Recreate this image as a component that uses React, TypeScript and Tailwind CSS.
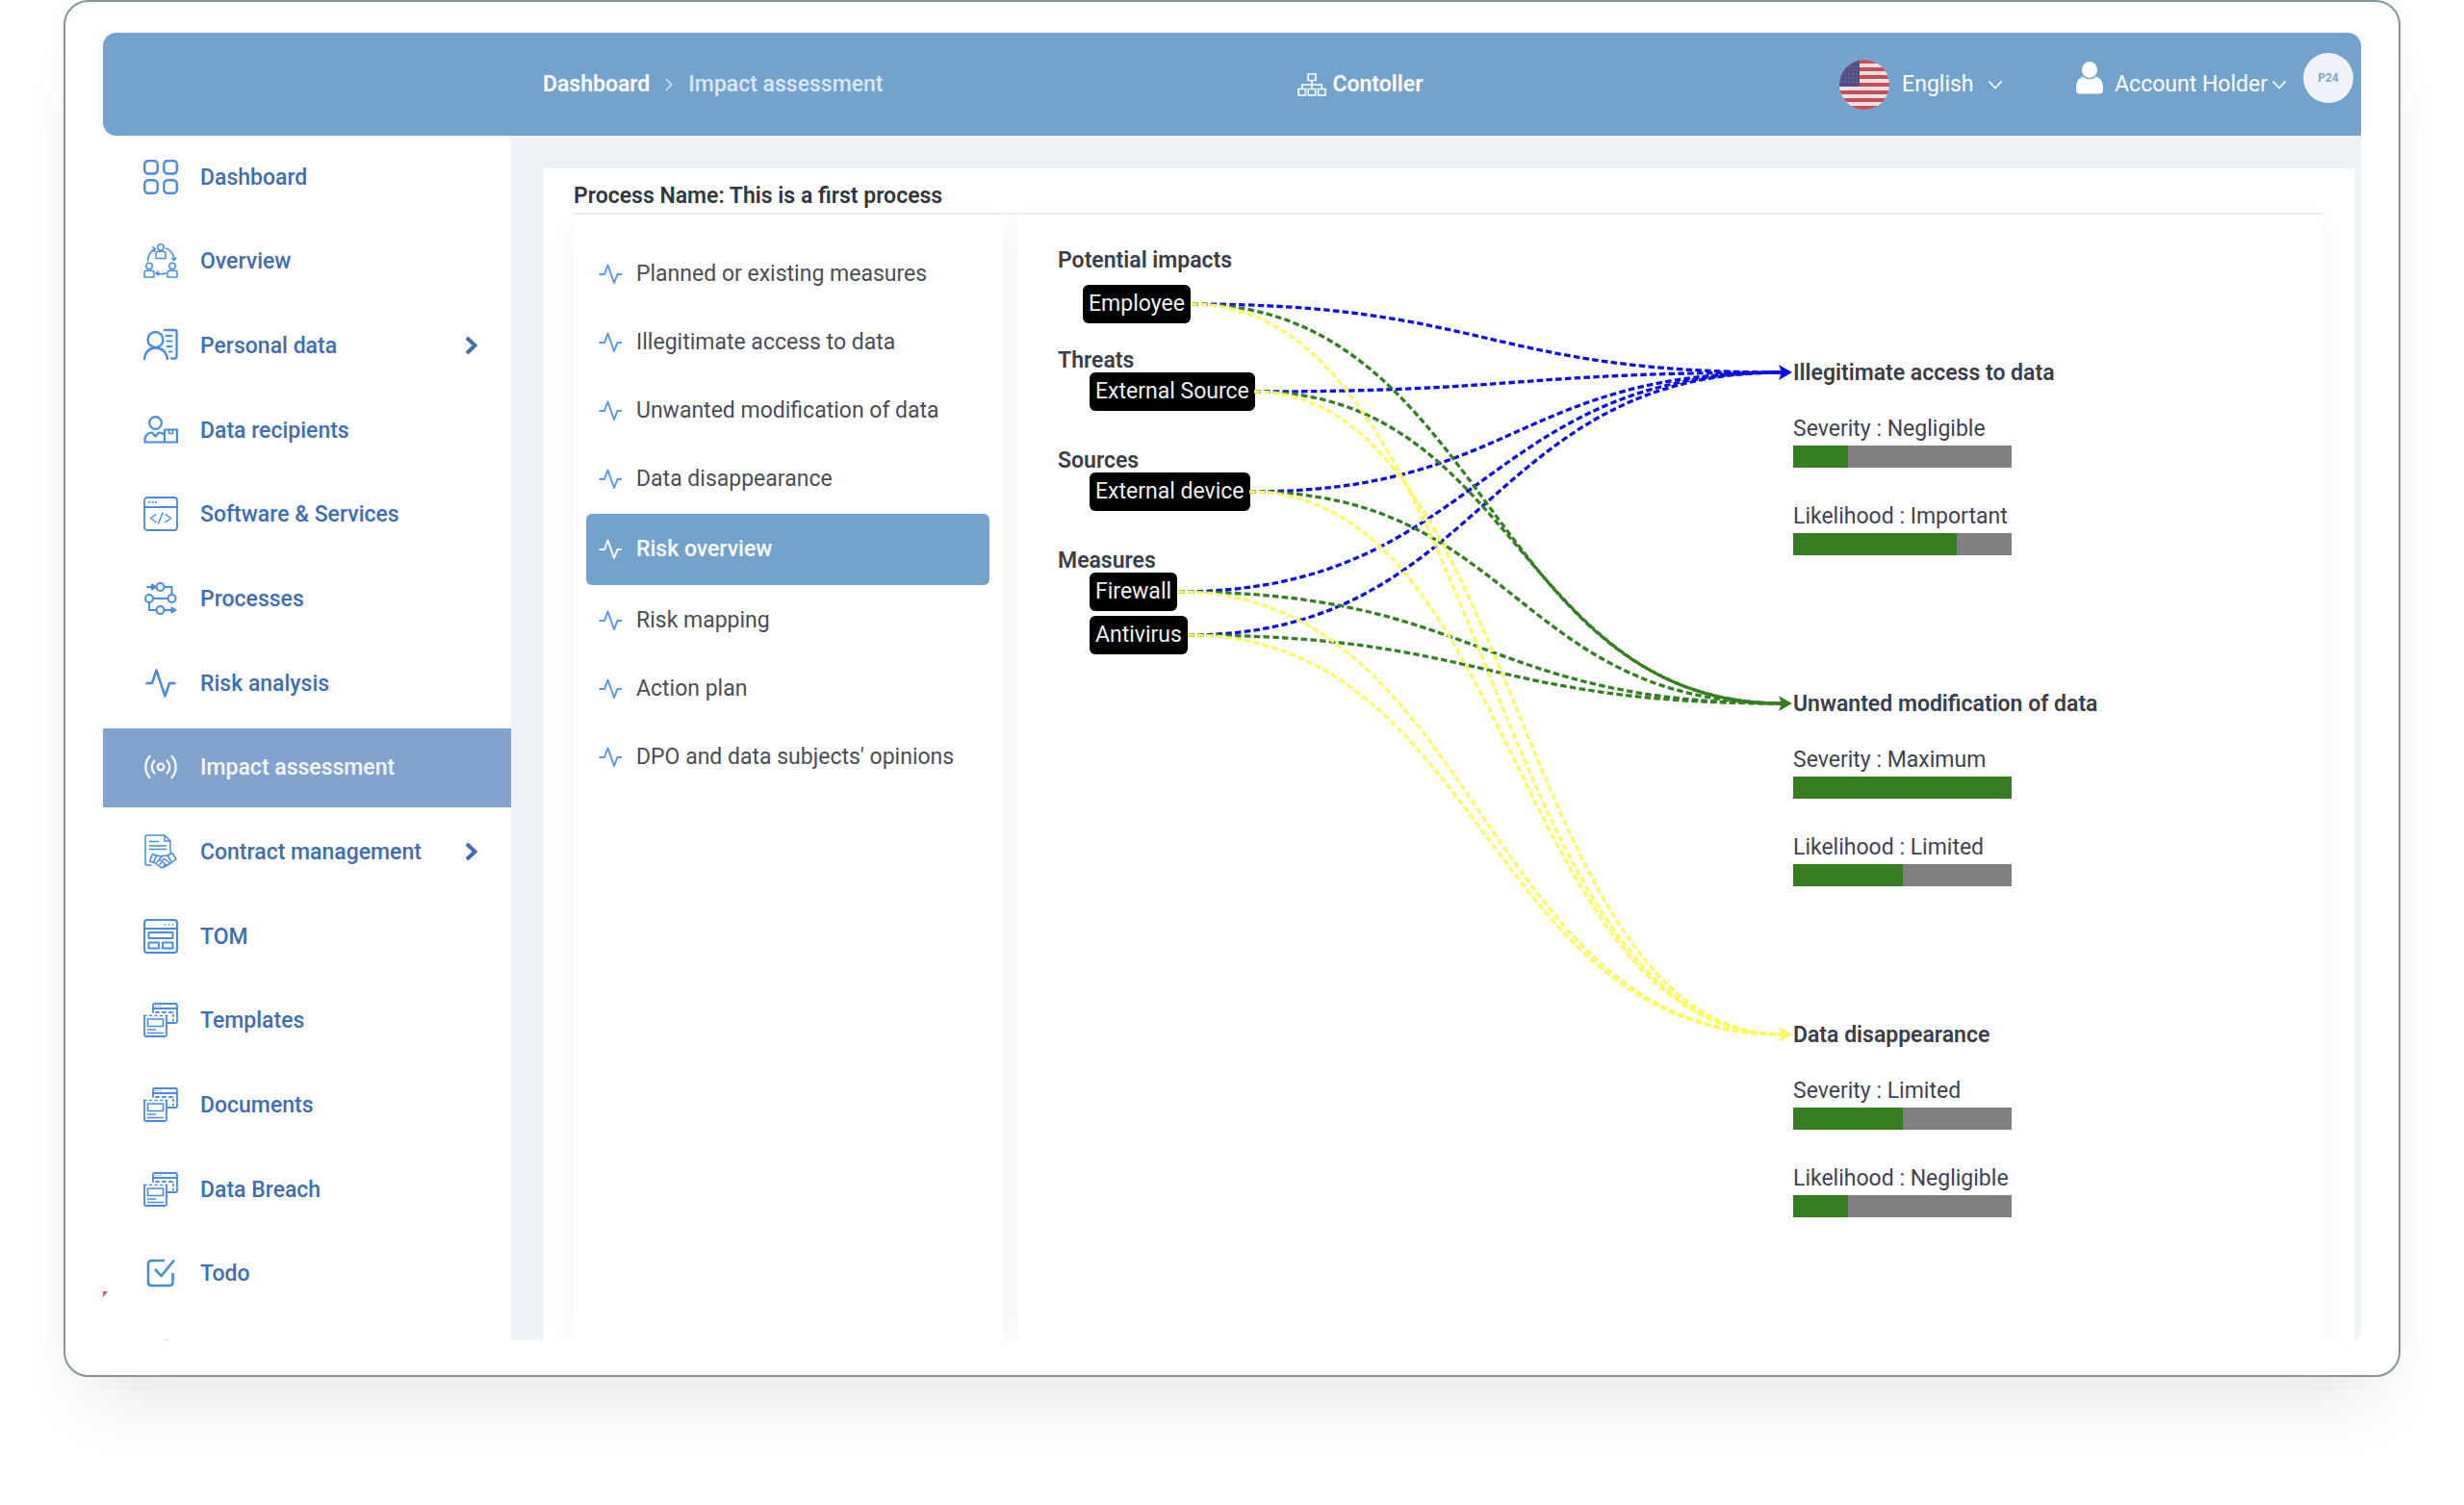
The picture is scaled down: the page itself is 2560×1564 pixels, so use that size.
import type { ReactNode } from "react";

type Tone = "blue" | "green" | "yellow";

const toneColor: Record<Tone, string> = {
  blue: "#0c0ce4",
  green: "#357f22",
  yellow: "#fdfb62",
};

/* ---------- icons ---------- */

function Icon({ children }: { children: ReactNode }) {
  return (
    <svg
      viewBox="0 0 36 36"
      className="size-9 shrink-0"
      fill="none"
      stroke="currentColor"
      strokeWidth="1.8"
      strokeLinecap="round"
      strokeLinejoin="round"
      aria-hidden="true"
    >
      {children}
    </svg>
  );
}

function GridIcon() {
  return (
    <Icon>
      <g strokeWidth="2.4">
        <rect x="1.2" y="1" width="13.5" height="13.5" rx="4" />
        <rect x="21.3" y="1" width="13.5" height="13.5" rx="4" />
        <rect x="1.2" y="21.3" width="13.5" height="13.5" rx="4" />
        <rect x="21.3" y="21.3" width="13.5" height="13.5" rx="4" />
      </g>
    </Icon>
  );
}

function OverviewIcon() {
  return (
    <Icon>
      <g strokeWidth="1.5">
        <circle cx="18" cy="4" r="3.2" />
        <path d="M13 15.5v-5q0-2.3 2.3-2.3h5.4q2.3 0 2.3 2.3v5z" />
        <circle cx="6" cy="23.5" r="3.2" />
        <path d="M1 35v-4.5q0-2.3 2.3-2.3h5.4q2.3 0 2.3 2.3V35z" />
        <circle cx="30" cy="23.5" r="3.2" />
        <path d="M25 35v-4.5q0-2.3 2.3-2.3h5.4q2.3 0 2.3 2.3V35z" />
        <path d="M4.5 18C4.8 12 7.5 8 12 5.5M9.5 3.8l3 1.5-1.5 3M23.5 5C28.5 7 31.5 11 32 17M29.5 15.5l2.5 2.2 1.8-2.8M23.5 31c-3 1-7 1-10 0M15.5 29.5l-2.5 1.3 2 2" />
      </g>
    </Icon>
  );
}

function PersonalDataIcon() {
  return (
    <Icon>
      <g strokeWidth="2.3">
        <circle cx="12.5" cy="12" r="8" />
        <path d="M1 32c1.2-8 5.5-11.5 11.5-11.5S23.5 24 25 32M22 2h10.5q2 0 2 2v25.5q0 2-2 2H29" />
        <path d="M23.5 8h6M24.5 13.5h5M24.5 19h5M27 24.5h2.5" strokeWidth="2" />
      </g>
    </Icon>
  );
}

function RecipientsIcon() {
  return (
    <Icon>
      <g strokeWidth="2.2">
        <circle cx="12.5" cy="10.5" r="6.3" />
        <path d="M22 30.5H1.5V28c0-4.5 3.5-7.5 7.5-7.5l3.5 4 3.5-4c2.5 0 4 .7 5.5 2M22 17.5h13v13H22z" />
        <path d="M26.5 17.5v4h4v-4" strokeWidth="1.6" />
      </g>
    </Icon>
  );
}

function SoftwareIcon() {
  return (
    <Icon>
      <rect x="1" y="1" width="34" height="34" rx="3" />
      <path d="M1 11h34" />
      <path d="M6 6h.1M9.5 6h.1M13 6h.1" strokeWidth="2.2" />
      <path d="M13 18.5l-5.5 4 5.5 4M23 18.5l5.5 4-5.5 4M20 17l-4.5 11" strokeWidth="1.5" />
    </Icon>
  );
}

function ProcessesIcon() {
  return (
    <Icon>
      <g strokeWidth="2">
        <circle cx="17.5" cy="6" r="4" />
        <circle cx="6" cy="18" r="4" />
        <circle cx="29.5" cy="18" r="4" />
        <circle cx="17.5" cy="30" r="4" />
        <path d="M4 6h9.5M9 3.5L12.5 6 9 8.5zM21.5 6h8v8M10 18h15.5M6 22v8h7.5M21.5 30H32M29.5 27.5l4 2.5-4 2.5z" />
      </g>
    </Icon>
  );
}

function PulseIcon() {
  return (
    <Icon>
      <path
        d="M2.5 18h6.5L13.5 4.5l9 27L27 18h6.5"
        strokeWidth="2.5"
        strokeLinecap="butt"
      />
    </Icon>
  );
}

function BroadcastIcon() {
  return (
    <Icon>
      <circle cx="18" cy="18" r="3.3" strokeWidth="2.3" />
      <path
        d="M11.5 11.5c-3.7 3.8-3.7 9.2 0 13M24.5 11.5c3.7 3.8 3.7 9.2 0 13M6.5 7c-5.5 6-5.5 16 0 22M29.5 7c5.5 6 5.5 16 0 22"
        strokeWidth="2.3"
      />
    </Icon>
  );
}

function ContractIcon() {
  return (
    <Icon>
      <g strokeWidth="1.5">
        <path d="M8 32H4q-2 0-2-2V3q0-2 2-2h18l6 6v12M22 1v6h6M6.5 7.5h9M6.5 12h17M6.5 15.5h17" />
        <path d="M9.5 20.5l-3 7.5 4 1.5 3-7.5zM30 19.5l-5 2.5 4.5 7 4.5-3z" />
        <path d="M13 22.5c3-.5 5 .5 6.5 0l5-.5M11 29l6.5 5q2 1.2 4 0l7.5-4.5M19.5 22.5l-3.5 4c1.5 1.5 4 .5 5.5-1l6 4.5M14 29l2-2M17 31.5l2-2.5M21 33.5l1.5-2.5M20 28.5l4.5 4" />
      </g>
    </Icon>
  );
}

function TomIcon() {
  return (
    <Icon>
      <g strokeWidth="2">
        <rect x="1" y="1" width="34" height="34" rx="3" />
        <path d="M1 10h34" />
        <path d="M22.5 5.8h.1M26.5 5.8h.1M30.5 5.8h.1" strokeWidth="1.6" />
        <rect x="5.5" y="14" width="25" height="6" />
        <rect x="5.5" y="24.5" width="10.5" height="6" />
        <rect x="20" y="24.5" width="10.5" height="6" />
      </g>
    </Icon>
  );
}

function TemplatesIcon() {
  return (
    <Icon>
      <path d="M10 10V2.5Q10 1 11.5 1h22Q35 1 35 2.5v17q0 1.500-1.500 1.500H25M10 6h25" />
      <path d="M12.5 3.5h.1M15 3.5h.1M17.5 3.5h.1" strokeWidth="1.2" />
      <path d="M13 10h18" strokeDasharray="3 4" strokeWidth="1.8" />
      <path d="M31 12.5v6" strokeDasharray="1.5 3.5" strokeWidth="1.8" />
      <path d="M1 13.5v20Q1 35 2.5 35h20q1.500 0 1.500-1.500v-20" />
      <path d="M1 13.5h23" strokeDasharray="2 3.5" strokeWidth="1.5" />
      <path d="M4.5 17h16v7.5h-16zM4.5 28h8M4.5 31.5h16" strokeWidth="1.6" />
    </Icon>
  );
}

function TodoIcon() {
  return (
    <Icon>
      <path
        d="M22 5H8.5Q5 5 5 8.5v19Q5 31 8.5 31H27q3.500 0 3.500-3.500V18M12 14l6.500 7L32 4.500"
        strokeWidth="2.6"
        strokeLinecap="butt"
      />
    </Icon>
  );
}

function SmallPulse() {
  return (
    <svg
      viewBox="0 0 26 26"
      className="size-[26px] shrink-0"
      fill="none"
      stroke="currentColor"
      strokeWidth="2"
      strokeLinejoin="round"
      aria-hidden="true"
    >
      <path d="M1.5 13h5.5L10.5 3.5l6.5 18.500L20.5 13H25" />
    </svg>
  );
}

function ChevronDown() {
  return (
    <svg
      viewBox="0 0 16 16"
      className="size-4"
      fill="none"
      stroke="currentColor"
      strokeWidth="1.7"
      aria-hidden="true"
    >
      <path d="M1.5 4.5L8 11.5l6.500-7" />
    </svg>
  );
}

function FlagIcon() {
  const stripes = [0, 2, 4, 6, 8, 10, 12];
  return (
    <svg viewBox="0 0 52 52" className="size-[52px] rounded-full" aria-hidden="true">
      <rect width="52" height="52" fill="#f6dfe2" />
      {stripes.map((n) => (
        <rect key={n} y={n * 4} width="52" height="4" fill="#bf5058" />
      ))}
      <rect width="21" height="28" fill="#524f86" />
      {[3, 7, 11, 15, 19, 23].map((y) => (
        <path
          key={y}
          d={`M1 ${y}h20`}
          stroke="#8583ad"
          strokeWidth="1.2"
          strokeDasharray="1.2 3"
        />
      ))}
    </svg>
  );
}

/* ---------- header ---------- */

function Header() {
  return (
    <header className="flex h-[107px] items-center rounded-l-[14px] rounded-tr-[14px] bg-[#73a3cd] pr-2 text-white">
      <nav aria-label="Breadcrumb" className="ml-[457px] flex items-center font-semibold">
        <a href="#dashboard">Dashboard</a>
        <svg
          viewBox="0 0 8 14"
          className="mx-4 h-3.5 w-2"
          fill="none"
          stroke="#d3e3f2"
          strokeWidth="1.6"
          aria-hidden="true"
        >
          <path d="M1 1l5.500 6L1 13" />
        </svg>
        <span className="font-medium text-[#dbe7f4]">Impact assessment</span>
      </nav>

      <div className="ml-[431px] flex items-center gap-1.5 font-semibold">
        <svg
          viewBox="0 0 30 24"
          className="h-6 w-[30px]"
          fill="none"
          stroke="currentColor"
          strokeWidth="1.6"
          aria-hidden="true"
        >
          <path d="M11 1h8v6.500h-8zM1 16.500h7.500V23H1zM11.200 16.500h7.500V23h-7.500zM21.500 16.500H29V23h-7.500zM15 7.500v9M4.700 16.500V12h20.600v4.500" />
        </svg>
        Contoller
      </div>

      <div className="ml-auto flex items-center">
        <FlagIcon />
        <div className="ml-[13px] flex items-center">
          <select
            aria-label="Language"
            className="h-10 w-[89px] appearance-none bg-transparent leading-10 outline-none"
          >
            <option>English</option>
          </select>
          <ChevronDown />
        </div>
        <button type="button" className="ml-[76px] flex items-center">
          <svg viewBox="0 0 28 34" className="mb-3.5 h-[34px] w-7" fill="currentColor" aria-hidden="true">
            <ellipse cx="14" cy="8.5" rx="8" ry="8.5" />
            <path d="M6.500 15.500q7.500 5.500 15 0Q28 19 28 27v3q0 3.500-4 3.500H4Q0 33.500 0 30v-3q0-8 6.500-11.500z" />
          </svg>
          <span className="mr-1 ml-3">Account Holder</span>
          <ChevronDown />
        </button>
        <div className="mb-3.5 ml-[17px] grid size-[52px] place-items-center rounded-full bg-[#f0f4fa] text-xs font-bold text-[#7ba6d3]">
          P24
        </div>
      </div>
    </header>
  );
}

/* ---------- sidebar ---------- */

type NavEntry = {
  label: string;
  icon: ReactNode;
  expandable?: boolean;
  active?: boolean;
};

const navEntries: NavEntry[] = [
  { label: "Dashboard", icon: <GridIcon /> },
  { label: "Overview", icon: <OverviewIcon /> },
  { label: "Personal data", icon: <PersonalDataIcon />, expandable: true },
  { label: "Data recipients", icon: <RecipientsIcon /> },
  { label: "Software & Services", icon: <SoftwareIcon /> },
  { label: "Processes", icon: <ProcessesIcon /> },
  { label: "Risk analysis", icon: <PulseIcon /> },
  { label: "Impact assessment", icon: <BroadcastIcon />, active: true },
  { label: "Contract management", icon: <ContractIcon />, expandable: true },
  { label: "TOM", icon: <TomIcon /> },
  { label: "Templates", icon: <TemplatesIcon /> },
  { label: "Documents", icon: <TemplatesIcon /> },
  { label: "Data Breach", icon: <TemplatesIcon /> },
  { label: "Todo", icon: <TodoIcon /> },
];

function Sidebar() {
  return (
    <nav aria-label="Main" className="relative w-[424px] shrink-0 pb-[25px]">
      <ul className="flex h-full flex-col">
        {navEntries.map((entry) => (
          <li key={entry.label} className="flex flex-1 py-[3px]">
            <a
              href="#"
              aria-current={entry.active ? "page" : undefined}
              className={`flex flex-1 items-center pr-8 pl-[42px] font-medium ${
                entry.active ? "bg-[#80a3cf] text-[#f6f9fd]" : "text-[#3f6eb0]"
              }`}
            >
              <span className={`mb-0.5 ${entry.active ? "text-[#f6f9fd]" : "text-[#4a8be0]"}`}>
                {entry.icon}
              </span>
              <span className="ml-[23px]">{entry.label}</span>
              {entry.expandable && (
                <svg
                  viewBox="0 0 16 20"
                  className="mb-0.5 ml-auto h-5 w-4"
                  fill="none"
                  stroke="currentColor"
                  strokeWidth="4"
                  aria-hidden="true"
                >
                  <path d="M2 2l8.500 8L2 18" />
                </svg>
              )}
            </a>
          </li>
        ))}
      </ul>
      <svg
        viewBox="0 0 5 6"
        className="absolute bottom-[45px] left-0 h-1.5 w-[5px]"
        fill="#e25563"
        aria-hidden="true"
      >
        <path d="M0 0h5L0 6z" />
      </svg>
      {/* tip of the next entry's icon, cut off by the bottom edge */}
      <span className="absolute bottom-0 left-16 h-0.5 w-1 rounded-t-full bg-[#cfdff5]" />
    </nav>
  );
}

/* ---------- process steps ---------- */

const steps = [
  "Planned or existing measures",
  "Illegitimate access to data",
  "Unwanted modification of data",
  "Data disappearance",
  "Risk overview",
  "Risk mapping",
  "Action plan",
  "DPO and data subjects' opinions",
];

function StepList({ current }: { current: string }) {
  return (
    <ul className="w-[446px] shrink-0 bg-white pt-[26px] pr-3.5 pl-[13px] shadow-[0_8px_28px_rgba(0,0,0,0.05)]">
      {steps.map((step) => (
        <li key={step}>
          <a
            href="#"
            aria-current={step === current ? "step" : undefined}
            className={`flex items-center gap-3.5 px-3 ${
              step === current
                ? "my-px h-[74px] rounded-md bg-[#73a3cd] font-medium text-white"
                : "h-[71px] text-[#4a4d58]"
            }`}
          >
            <span className={step === current ? "text-white" : "text-[#5b98ea]"}>
              <SmallPulse />
            </span>
            {step}
          </a>
        </li>
      ))}
    </ul>
  );
}

/* ---------- risk diagram ---------- */

function Heading({ children }: { children: ReactNode }) {
  return <h3 className="font-semibold text-[#3a3d4b]">{children}</h3>;
}

function Chip({ children }: { children: ReactNode }) {
  return (
    <li className="flex h-10 w-fit items-center rounded-md bg-black px-1.5 text-[#eeeeee]">
      {children}
    </li>
  );
}

type Outcome = {
  title: string;
  meters: { label: string; value: string; percent: number }[];
};

const outcomes: Outcome[] = [
  {
    title: "Illegitimate access to data",
    meters: [
      { label: "Severity", value: "Negligible", percent: 25 },
      { label: "Likelihood", value: "Important", percent: 75 },
    ],
  },
  {
    title: "Unwanted modification of data",
    meters: [
      { label: "Severity", value: "Maximum", percent: 100 },
      { label: "Likelihood", value: "Limited", percent: 50 },
    ],
  },
  {
    title: "Data disappearance",
    meters: [
      { label: "Severity", value: "Limited", percent: 50 },
      { label: "Likelihood", value: "Negligible", percent: 25 },
    ],
  },
];

// Anchor points inside the diagram, relative to its top left corner.
const sources = [
  { x: 180, y: 93 },
  { x: 245, y: 184 },
  { x: 240, y: 288 },
  { x: 166, y: 392 },
  { x: 176, y: 437 },
];

const targets: { x: number; y: number; tone: Tone }[] = [
  { x: 804, y: 164, tone: "blue" },
  { x: 804, y: 508, tone: "green" },
  { x: 804, y: 852, tone: "yellow" },
];

function Edges() {
  return (
    <svg
      className="pointer-events-none absolute top-0 left-0"
      width="820"
      height="900"
      fill="none"
      aria-hidden="true"
    >
      {targets.map((t) => (
        <g key={t.tone} stroke={toneColor[t.tone]}>
          {sources.map((s, i) => {
            const end = t.x - 10;
            const mid = (s.x + end) / 2;
            return (
              <path
                key={i}
                d={`M${s.x} ${s.y}C${mid} ${s.y} ${mid} ${t.y} ${end} ${t.y}`}
                strokeWidth="3.3"
                strokeDasharray="6.5 3.3"
              />
            );
          })}
          <path
            d={`M${t.x} ${t.y}l-14-8 3 8-3 8z`}
            fill={toneColor[t.tone]}
            stroke="none"
          />
        </g>
      ))}
    </svg>
  );
}

function RiskDiagram() {
  return (
    <section
      aria-label="Risk overview"
      className="relative flex flex-1 bg-white pl-[41px] shadow-[0_8px_28px_rgba(0,0,0,0.05)]"
    >
      <div className="w-[764px] shrink-0 pt-[35px] leading-[26px]">
        <Heading>Potential impacts</Heading>
        <ul className="mt-3 mb-[26px] pl-[26px]">
          <Chip>Employee</Chip>
        </ul>
        <Heading>Threats</Heading>
        <ul className="-mt-px mb-[39px] pl-[33px]">
          <Chip>External Source</Chip>
        </ul>
        <Heading>Sources</Heading>
        <ul className="-mt-px mb-[39px] pl-[33px]">
          <Chip>External device</Chip>
        </ul>
        <Heading>Measures</Heading>
        <ul className="-mt-px flex flex-col gap-[5px] pl-[33px]">
          <Chip>Firewall</Chip>
          <Chip>Antivirus</Chip>
        </ul>
      </div>

      <div className="flex flex-1 flex-col gap-[142px] pt-[152px] leading-[26px]">
        {outcomes.map((outcome) => (
          <article key={outcome.title}>
            <Heading>{outcome.title}</Heading>
            <div className="mt-8 flex flex-col gap-[38px]">
              {outcome.meters.map((m) => (
                <div key={m.label} className="text-[#3f4254]">
                  <p>
                    {m.label} : {m.value}
                  </p>
                  <div
                    role="meter"
                    aria-label={m.label}
                    aria-valuenow={m.percent}
                    className="mt-1 h-[23px] w-[227px] bg-[#808080]"
                  >
                    <div className="h-full bg-[#357f22]" style={{ width: `${m.percent}%` }} />
                  </div>
                </div>
              ))}
            </div>
          </article>
        ))}
      </div>

      <Edges />
    </section>
  );
}

export default function App() {
  return (
    <div className="bg-white px-[66px] pb-[133px] font-['Roboto',sans-serif] text-[23px] leading-7">
      <div className="rounded-[26px] border-2 border-[#84959c] bg-white px-[39px] pt-8 pb-9 shadow-[0_48px_72px_-24px_rgba(0,0,0,0.09),0_0_30px_rgba(0,0,0,0.02)]">
        <Header />
        <div className="flex min-h-[1252px]">
          <Sidebar />
          <main className="flex min-w-0 flex-1 rounded-br-lg bg-[#eff3f8] pt-[34px] pr-[7px] pl-[33px]">
            <div className="flex flex-1 flex-col overflow-hidden bg-white pr-[33px] pl-8">
              <h2 className="border-b-2 border-[#eef0f4] pt-[15px] pb-[3px] font-semibold text-[#33363f]">
                Process Name: This is a first process
              </h2>
              <div className="flex flex-1 gap-4">
                <StepList current="Risk overview" />
                <RiskDiagram />
              </div>
            </div>
          </main>
        </div>
      </div>
    </div>
  );
}
